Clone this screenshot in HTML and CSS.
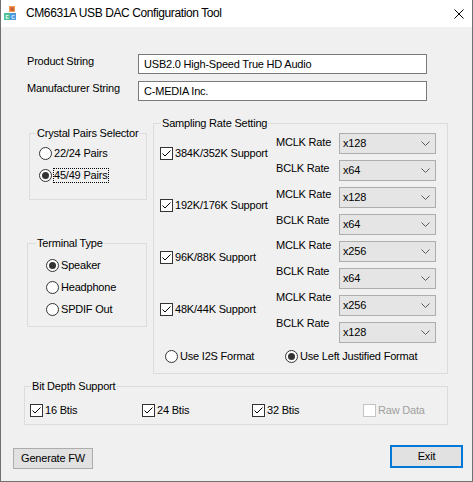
FILE: index.html
```html
<!DOCTYPE html>
<html>
<head>
<meta charset="utf-8">
<title>CM6631A USB DAC Configuration Tool</title>
<link rel="stylesheet" href="styles.css">
</head>
<body>
<div class="window">
  <div class="titlebar">
    <svg class="app-icon" width="16" height="16" viewBox="0 0 16 16">
      <rect x="5" y="0" width="6" height="6" fill="#f59a55"/>
      <text x="8" y="5" font-size="5" font-family="Liberation Sans" font-weight="bold" text-anchor="middle" fill="#b03a1a">N</text>
      <rect x="0" y="7" width="6" height="7" fill="#4fbf9a"/>
      <text x="3" y="12.5" font-size="5" font-family="Liberation Sans" font-weight="bold" text-anchor="middle" fill="#e8fff4">E</text>
      <rect x="6" y="7" width="6" height="7" fill="#4a9be0"/>
      <text x="9" y="12.5" font-size="5" font-family="Liberation Sans" font-weight="bold" text-anchor="middle" fill="#eaf4ff">C</text>
    </svg>
    <span class="title">CM6631A USB DAC Configuration Tool</span>
    <svg class="close" width="10" height="10" viewBox="0 0 10 10"><path d="M0.5 0.5 L9.5 9.5 M9.5 0.5 L0.5 9.5" stroke="#000" stroke-width="1" fill="none"/></svg>
  </div>
  <div class="client">
    <div class="strings">
      <span class="field-label">Product String</span>
      <div class="edit">USB2.0 High-Speed True HD Audio</div>
      <span class="field-label">Manufacturer String</span>
      <div class="edit">C-MEDIA Inc.</div>
    </div>

    <div class="middle">
      <div class="left-col">
        <fieldset class="group crystal">
          <legend>Crystal Pairs Selector</legend>
          <div class="body list">
            <div class="opt"><span class="radio"></span><span>22/24 Pairs</span></div>
            <div class="opt"><span class="radio on"></span><span class="focus">45/49 Pairs</span></div>
          </div>
        </fieldset>
        <fieldset class="group terminal">
          <legend>Terminal Type</legend>
          <div class="body list">
            <div class="opt"><span class="radio on"></span><span>Speaker</span></div>
            <div class="opt"><span class="radio"></span><span>Headphone</span></div>
            <div class="opt"><span class="radio"></span><span>SPDIF Out</span></div>
          </div>
        </fieldset>
      </div>

      <fieldset class="group sampling">
        <legend>Sampling Rate Setting</legend>
        <div class="body">
          <div class="rates">
            <div class="checks">
              <div class="opt"><span class="check"><svg width="11" height="11" viewBox="0 0 11 11"><path d="M1.5 5.5 L4 8 L9.5 2.5" fill="none" stroke="#000" stroke-width="1"/></svg></span><span>384K/352K Support</span></div>
              <div class="opt"><span class="check"><svg width="11" height="11" viewBox="0 0 11 11"><path d="M1.5 5.5 L4 8 L9.5 2.5" fill="none" stroke="#000" stroke-width="1"/></svg></span><span>192K/176K Support</span></div>
              <div class="opt"><span class="check"><svg width="11" height="11" viewBox="0 0 11 11"><path d="M1.5 5.5 L4 8 L9.5 2.5" fill="none" stroke="#000" stroke-width="1"/></svg></span><span>96K/88K Support</span></div>
              <div class="opt"><span class="check"><svg width="11" height="11" viewBox="0 0 11 11"><path d="M1.5 5.5 L4 8 L9.5 2.5" fill="none" stroke="#000" stroke-width="1"/></svg></span><span>48K/44K Support</span></div>
            </div>
            <div class="labels">
              <span>MCLK Rate</span><span>BCLK Rate</span>
              <span>MCLK Rate</span><span>BCLK Rate</span>
              <span>MCLK Rate</span><span>BCLK Rate</span>
              <span>MCLK Rate</span><span>BCLK Rate</span>
            </div>
            <div class="combos">
              <div class="combo"><span>x128</span><svg width="9" height="5" viewBox="0 0 9 5"><path d="M0.5 0.5 L4.5 4.5 L8.5 0.5" fill="none" stroke="#5a5a5a" stroke-width="1"/></svg></div>
              <div class="combo"><span>x64</span><svg width="9" height="5" viewBox="0 0 9 5"><path d="M0.5 0.5 L4.5 4.5 L8.5 0.5" fill="none" stroke="#5a5a5a" stroke-width="1"/></svg></div>
              <div class="combo"><span>x128</span><svg width="9" height="5" viewBox="0 0 9 5"><path d="M0.5 0.5 L4.5 4.5 L8.5 0.5" fill="none" stroke="#5a5a5a" stroke-width="1"/></svg></div>
              <div class="combo"><span>x64</span><svg width="9" height="5" viewBox="0 0 9 5"><path d="M0.5 0.5 L4.5 4.5 L8.5 0.5" fill="none" stroke="#5a5a5a" stroke-width="1"/></svg></div>
              <div class="combo"><span>x256</span><svg width="9" height="5" viewBox="0 0 9 5"><path d="M0.5 0.5 L4.5 4.5 L8.5 0.5" fill="none" stroke="#5a5a5a" stroke-width="1"/></svg></div>
              <div class="combo"><span>x64</span><svg width="9" height="5" viewBox="0 0 9 5"><path d="M0.5 0.5 L4.5 4.5 L8.5 0.5" fill="none" stroke="#5a5a5a" stroke-width="1"/></svg></div>
              <div class="combo"><span>x256</span><svg width="9" height="5" viewBox="0 0 9 5"><path d="M0.5 0.5 L4.5 4.5 L8.5 0.5" fill="none" stroke="#5a5a5a" stroke-width="1"/></svg></div>
              <div class="combo"><span>x128</span><svg width="9" height="5" viewBox="0 0 9 5"><path d="M0.5 0.5 L4.5 4.5 L8.5 0.5" fill="none" stroke="#5a5a5a" stroke-width="1"/></svg></div>
            </div>
          </div>
          <div class="format">
            <div class="opt"><span class="radio"></span><span>Use I2S Format</span></div>
            <div class="opt"><span class="radio on"></span><span>Use Left Justified Format</span></div>
          </div>
        </div>
      </fieldset>
    </div>

    <fieldset class="group bitdepth">
      <legend>Bit Depth Support</legend>
      <div class="body bits">
        <div class="opt"><span class="check"><svg width="11" height="11" viewBox="0 0 11 11"><path d="M1.5 5.5 L4 8 L9.5 2.5" fill="none" stroke="#000" stroke-width="1"/></svg></span><span>16 Btis</span></div>
        <div class="opt"><span class="check"><svg width="11" height="11" viewBox="0 0 11 11"><path d="M1.5 5.5 L4 8 L9.5 2.5" fill="none" stroke="#000" stroke-width="1"/></svg></span><span>24 Btis</span></div>
        <div class="opt"><span class="check"><svg width="11" height="11" viewBox="0 0 11 11"><path d="M1.5 5.5 L4 8 L9.5 2.5" fill="none" stroke="#000" stroke-width="1"/></svg></span><span>32 Btis</span></div>
        <div class="opt disabled"><span class="check"></span><span>Raw Data</span></div>
      </div>
    </fieldset>

    <div class="buttons">
      <div class="btn gen">Generate FW</div>
      <div class="btn exit">Exit</div>
    </div>
  </div>
</div>
</body>
</html>
```
FILE: styles.css
```css
* { box-sizing: border-box; }
html, body { margin: 0; padding: 0; }
body {
  background: #f0f0f0;
  font-family: "Liberation Sans", Arial, sans-serif;
  font-size: 11px;
  line-height: 13px;
  letter-spacing: -0.2px;
  color: #000;
}
.window {
  width: 473px;
  height: 482px;
  border: 1px solid #707070;
  border-top: 0;
  background: #f0f0f0;
  display: flex;
  flex-direction: column;
  overflow: hidden;
}
.titlebar {
  height: 27px;
  flex: none;
  background: #fff;
  display: flex;
  align-items: center;
  padding: 0 8px 0 3px;
}
.app-icon { flex: none; display: block; }
.title {
  margin-left: 6px;
  font-size: 12px;
  letter-spacing: -0.4px;
  white-space: nowrap;
}
.close { margin-left: auto; flex: none; display: block; }

.client {
  flex: 1;
  display: flex;
  flex-direction: column;
  align-items: flex-start;
}
.strings {
  display: grid;
  grid-template-columns: 111px 289px;
  row-gap: 7px;
  align-items: start;
  margin: 27px 0 0 26px;
}
.field-label { white-space: nowrap; padding-top: 1px; }
.edit {
  height: 20px;
  border: 1px solid #7a7a7a;
  background: #fff;
  padding: 0 5px;
  line-height: 18px;
  white-space: nowrap;
}

.middle {
  display: flex;
  align-items: flex-start;
  margin-top: 16px;
}
.left-col {
  display: flex;
  flex-direction: column;
  align-items: flex-start;
  margin-top: 10px;
}
.group {
  margin: 0;
  padding: 0;
  border: 1px solid #dcdcdc;
  min-width: 0;
}
.group > legend {
  padding: 0 1px;
  line-height: 13px;
  white-space: nowrap;
}
.list { display: flex; flex-direction: column; gap: 9px; }

.crystal { margin-left: 28px; width: 118px; }
.crystal > legend { margin-left: 6px; }
.crystal .body { padding: 6.5px 0 17.5px 9px; }

.terminal { margin: 36.5px 0 0 26px; width: 120px; }
.terminal > legend { margin-left: 8px; }
.terminal .body { padding: 9px 0 10.5px 18px; }

.opt {
  display: flex;
  align-items: center;
  gap: 2px;
  height: 13px;
  white-space: nowrap;
}
.radio {
  width: 13px;
  height: 13px;
  flex: none;
  border: 1px solid #333;
  border-radius: 50%;
  background: #fff;
  display: flex;
  align-items: center;
  justify-content: center;
}
.radio.on::after {
  content: "";
  width: 7px;
  height: 7px;
  border-radius: 50%;
  background: #333;
}
.check {
  width: 13px;
  height: 13px;
  flex: none;
  border: 1px solid #333;
  background: #fff;
}
.check svg { display: block; }
.focus {
  border: 1px dotted #000;
  margin: -1px 0 -1px -1px;
  padding: 0 1px 0 0;
}

.sampling { margin-left: 6px; width: 295px; }
.sampling > legend { margin-left: 7px; }
.sampling .body { padding: 3px 0 10.5px 6px; }
.rates { display: flex; align-items: flex-start; }
.checks {
  width: 116px;
  margin-top: 13.5px;
  display: flex;
  flex-direction: column;
  gap: 39px;
}
.labels {
  width: 63px;
  margin-top: 3px;
  display: flex;
  flex-direction: column;
  gap: 12.86px;
}
.labels span { display: block; height: 13px; white-space: nowrap; }
.combos { display: flex; flex-direction: column; gap: 6px; }
.combo {
  width: 97px;
  height: 21px;
  border: 1px solid #adadad;
  background: #e5e5e5;
  display: flex;
  align-items: center;
  padding: 0 5px 0 3px;
}
.combo svg { margin-left: auto; display: block; }
.format { display: flex; margin-top: 6.5px; padding-left: 5px; }
.format .opt:first-child { width: 120px; }

.bitdepth { margin: 5.5px 0 0 23px; width: 424px; }
.bitdepth > legend { margin-left: 6px; }
.bits {
  padding: 11px 0 7px 5px;
  display: grid;
  grid-template-columns: 112px 110px 111px auto;
}
.opt.disabled { color: #a0a0a0; }
.opt.disabled .check { border-color: #c4c4c4; }

.buttons {
  align-self: stretch;
  display: flex;
  justify-content: space-between;
  align-items: flex-start;
  margin-top: 20.5px;
  padding: 0 9px 0 12px;
}
.btn {
  background: #e1e1e1;
  border: 1px solid #adadad;
  display: flex;
  align-items: center;
  justify-content: center;
  white-space: nowrap;
}
.gen { width: 80px; height: 21px; margin-top: 3px; }
.exit { width: 73px; height: 23px; border: 2px solid #0078d7; }
```
